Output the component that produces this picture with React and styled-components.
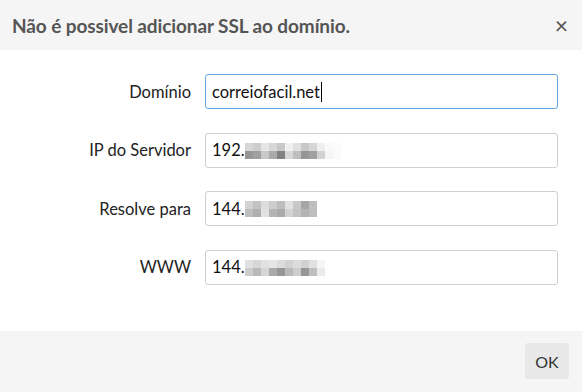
import React from 'react';
import styled, { createGlobalStyle } from 'styled-components';

const GlobalStyle = createGlobalStyle`
  html, body {
    margin: 0;
    padding: 0;
    background: #fff;
  }
  body {
    font-family: Lato, 'Open Sans', sans-serif;
  }
`;

const Dialog = styled.div`
  width: 582px;
  height: 392px;
  display: flex;
  flex-direction: column;
  background: #fff;
`;

const Header = styled.div`
  height: 50px;
  flex: 0 0 50px;
  display: flex;
  align-items: center;
  justify-content: space-between;
  padding: 0 12px;
  box-sizing: border-box;
  background: #f5f5f5;

  h1 {
    margin: 0;
    font-size: 19px;
    font-weight: 700;
    color: #555;
    letter-spacing: -0.1px;
  }
`;

const Close = styled.button`
  border: 0;
  background: none;
  padding: 0;
  margin-right: 2px;
  font-family: inherit;
  font-size: 23px;
  line-height: 1;
  color: #555;
`;

const Body = styled.div`
  flex: 1;
  padding: 24px 0 0 0;
  display: grid;
  grid-template-columns: 191px 353px;
  grid-auto-rows: 35px;
  column-gap: 14px;
  row-gap: 23.5px;
  align-content: start;
`;

const Label = styled.label`
  display: flex;
  align-items: center;
  justify-content: flex-end;
  font-size: 16.5px;
  color: #222;
`;

const Field = styled.div`
  display: flex;
  align-items: center;
  box-sizing: border-box;
  height: 35px;
  padding: 0 6px;
  border: 1px solid ${p => (p.$focused ? '#66a6dc' : '#cfcfcf')};
  border-radius: 3px;
  background: #fff;
  font-size: 16.5px;
  color: #111;
`;

const Caret = styled.span`
  display: inline-block;
  width: 1px;
  height: 20px;
  background: #000;
  margin-left: 1px;
`;

const Blur = styled.span`
  display: inline-grid;
  grid-auto-flow: column;
  grid-template-rows: 8px 8px;
  margin-top: 1px;
`;

const Px = styled.span`
  width: 8px;
  height: 8px;
`;

const Footer = styled.div`
  flex: 0 0 61px;
  display: flex;
  justify-content: flex-end;
  align-items: flex-start;
  padding: 12px 13px 0 0;
  box-sizing: border-box;
  background: #f5f5f5;
`;

const Button = styled.button`
  width: 44px;
  height: 36px;
  border: 0;
  border-radius: 3px;
  background: #e8e8e8;
  font-family: inherit;
  font-size: 16px;
  color: #333;
`;

// pixelated blur columns: [top, bottom] gray levels
const blurs = {
  ip: [
    [215, 150], [205, 160], [230, 200], [215, 170], [200, 130], [240, 215],
    [225, 190], [200, 150], [215, 160], [240, 210], [250, 245], [252, 250],
  ],
  resolve: [
    [210, 190], [195, 175], [220, 225], [205, 180], [190, 170], [225, 210],
    [200, 195], [165, 180], [190, 190],
  ],
  www: [
    [225, 205], [215, 185], [225, 215], [230, 170], [220, 150], [210, 185],
    [220, 205], [210, 150], [225, 190], [245, 235],
  ],
};

function Blurred({ cols }) {
  return (
    <Blur>
      {cols.flatMap(([a, b], i) => [
        <Px key={`${i}a`} style={{ background: `rgb(${a},${a},${a})` }} />,
        <Px key={`${i}b`} style={{ background: `rgb(${b},${b},${b})` }} />,
      ])}
    </Blur>
  );
}

export default function App() {
  return (
    <>
      <GlobalStyle />
      <Dialog>
        <Header>
          <h1>Não é possivel adicionar SSL ao domínio.</h1>
          <Close aria-label="Fechar">×</Close>
        </Header>

        <Body>
          <Label>Domínio</Label>
          <Field $focused>
            correiofacil.net
            <Caret />
          </Field>

          <Label>IP do Servidor</Label>
          <Field>
            192.
            <Blurred cols={blurs.ip} />
          </Field>

          <Label>Resolve para</Label>
          <Field>
            144.
            <Blurred cols={blurs.resolve} />
          </Field>

          <Label>WWW</Label>
          <Field>
            144.
            <Blurred cols={blurs.www} />
          </Field>
        </Body>

        <Footer>
          <Button>OK</Button>
        </Footer>
      </Dialog>
    </>
  );
}
